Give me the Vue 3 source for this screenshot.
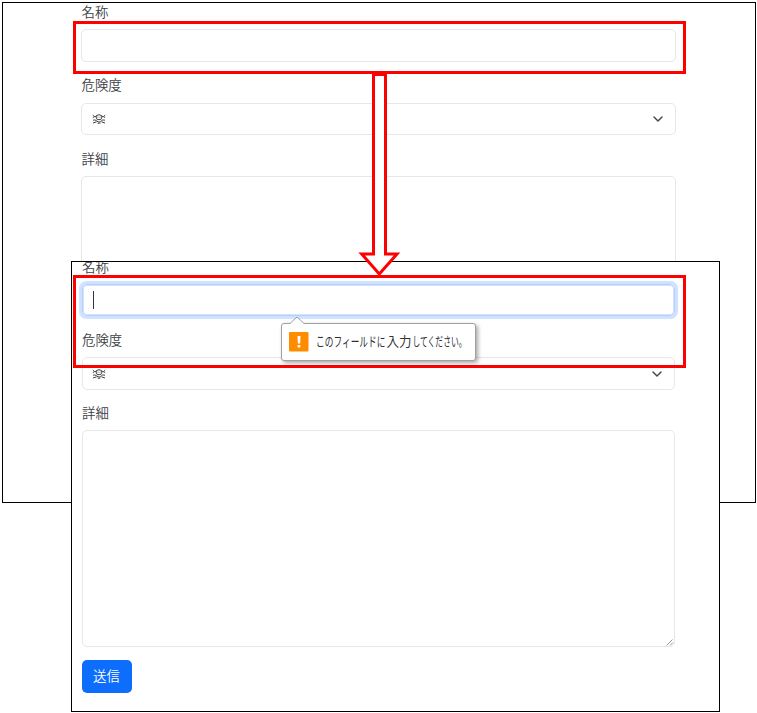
<script setup>
const message = [
  { text: 'このフィールドに', x: 0, width: 69.5 },
  { text: '入力', x: 70.5, width: 25 },
  { text: 'してください。', x: 96.5, width: 54 },
]
const skull = 'M4.3 4.8V2.6Q7 .8 9.7 2.6V4.8L8.8 6.6H5.2ZM5.6 4.2H6.4M7.6 4.2H8.4M.8 2.2L2.6 3.6L.8 4.6M13.2 2.2L11.4 3.6L13.2 4.6M2.6 3.6H4M11.4 3.6H10M1 7.2Q3 6.4 4.6 7.8T7 9Q8.4 9.2 9.4 7.8T13 7.2M1 10L4.6 8.8M13 10L9.4 8.8M5.6 10.2H8.4'
</script>

<template>
  <main class="stage">
    <section class="panel back">
      <label class="label">名称</label>
      <div class="field"></div>
      <label class="label">危険度</label>
      <div class="field select">
        <svg class="skull" width="14" height="12" viewBox="0 0 14 12"><path :d="skull" /></svg>
        <svg class="chevron" width="12" height="8" viewBox="0 0 12 8"><path d="M2 2L6 6L10 2" /></svg>
      </div>
      <label class="label">詳細</label>
      <div class="field area"></div>
    </section>

    <section class="panel front">
      <label class="label">名称</label>
      <div class="field focused"><span class="caret"></span></div>
      <label class="label">危険度</label>
      <div class="field select">
        <svg class="skull" width="14" height="12" viewBox="0 0 14 12"><path :d="skull" /></svg>
        <svg class="chevron" width="12" height="8" viewBox="0 0 12 8"><path d="M2 2L6 6L10 2" /></svg>
      </div>
      <label class="label">詳細</label>
      <div class="field area">
        <svg class="grip" width="8" height="8" viewBox="0 0 8 8"><path d="M.5 7.5L6.5 1.5M4 7.5L7 4.5" /></svg>
      </div>
      <button class="submit">送信</button>
    </section>

    <div class="mark first"></div>
    <div class="mark second"></div>
    <svg class="arrow" width="44" height="206" viewBox="0 0 44 206">
      <path d="M15.5 2.5H27.5V182H39L21.3 202L3.7 182H15.5Z" />
    </svg>

    <div class="tooltip">
      <svg class="pointer" width="16" height="9" viewBox="0 0 16 9"><path class="fill" d="M1 9V7.5L8 1L15 7.5V9Z" /><path class="edge" d="M1 7.5L8 1L15 7.5" /></svg>
      <svg class="warning" width="20" height="20" viewBox="0 0 20 20">
        <rect width="19.5" height="19.5" rx="1" fill="#ff8c00" />
        <path d="M8.5 4H11.5L11.2 11.5H8.8ZM8.6 13H11.4V15.6H8.6Z" fill="#fff" />
      </svg>
      <svg class="message" width="152" height="20" viewBox="0 0 152 20">
        <text v-for="part in message" :key="part.x" :x="part.x" y="14" :textLength="part.width" lengthAdjust="spacingAndGlyphs">{{ part.text }}</text>
      </svg>
    </div>
  </main>
</template>

<style>
body {
  background: #fff;
}
</style>

<style scoped>
.stage {
  position: relative;
  width: 757px;
  height: 713px;
  overflow: hidden;
  font-family: "Noto Sans CJK JP", sans-serif;
  color: #3c4146;
}
.panel {
  position: absolute;
  box-sizing: border-box;
  display: flex;
  flex-direction: column;
  border: 1px solid #000;
  background: #fff;
  overflow: hidden;
}
.back {
  left: 2px;
  top: 2px;
  width: 754px;
  height: 501px;
  padding: 0 79px 0 78px;
}
.front {
  left: 71px;
  top: 261px;
  width: 649px;
  height: 451px;
  padding: 0 44px 0 10px;
}
.label {
  flex: none;
  height: 20px;
  line-height: 20px;
  font-size: 13.4px;
  font-weight: 350;
}
.back .label {
  padding-left: 0.5px;
}
.field {
  flex: none;
  box-sizing: border-box;
  border: 1px solid #e6e7e9;
  border-radius: 5px;
}
.back .field {
  height: 33px;
  margin: 8px 0 12px;
}
.back .label:first-child {
  margin-top: -2px;
}
.back .field.select {
  height: 32px;
  margin: 9px 0 13px;
}
.back .field.area {
  height: 250px;
  margin: 8px 0 0;
}
.front .label:first-child {
  margin-top: -6px;
}
.front .field {
  height: 32px;
  margin: 8px 0 13px;
}
.front .field.select {
  height: 33px;
  margin: 8px 0 12px;
}
.front .field.area {
  height: 217px;
  margin: 8px 0 13px;
  display: flex;
  align-items: flex-end;
  justify-content: flex-end;
}
.front .field.focused {
  display: flex;
  align-items: center;
  padding-left: 10px;
  border-color: #b5d0fb;
  box-shadow: 0 0 1px 2.5px #cfe1ff, inset 0 0 0 1px #d5e4fd;
}
.caret {
  width: 1px;
  height: 18px;
  background: #33373b;
}
.select {
  display: flex;
  align-items: center;
  justify-content: space-between;
  padding: 0 11px 0 10px;
}
.front .select {
  padding-left: 9px;
}
.skull path {
  fill: none;
  stroke: #3f4347;
  stroke-width: 1;
}
.chevron path {
  fill: none;
  stroke: #45494e;
  stroke-width: 1.5;
  stroke-linecap: round;
  stroke-linejoin: round;
}
.grip path {
  stroke: #999;
  stroke-width: 1;
}
.submit {
  flex: none;
  align-self: flex-start;
  width: 50px;
  height: 33px;
  padding: 0 1px 3px 0;
  border: 0;
  border-radius: 5px;
  background: #0d6efd;
  color: #fff;
  font: 350 13.4px/29px "Noto Sans CJK JP", sans-serif;
}
.mark {
  position: absolute;
  left: 73px;
  width: 613px;
  box-sizing: border-box;
  border: 3px solid #f00;
}
.first {
  top: 21px;
  height: 53px;
}
.second {
  top: 275px;
  height: 93px;
}
.arrow {
  position: absolute;
  left: 358px;
  top: 72px;
}
.arrow path {
  fill: #fff;
  stroke: #f00;
  stroke-width: 3;
}
.tooltip {
  position: absolute;
  left: 281px;
  top: 323px;
  width: 195px;
  height: 38px;
  box-sizing: border-box;
  display: flex;
  align-items: center;
  gap: 7px;
  padding: 0 7px 1px;
  border: 1px solid #a0a0a0;
  border-radius: 3px;
  background: #fff;
  box-shadow: 2px 2px 4px rgba(0, 0, 0, 0.35);
}
.pointer {
  position: absolute;
  left: 7px;
  top: -8px;
}
.pointer .fill {
  fill: #fff;
}
.pointer .edge {
  fill: none;
  stroke: #a0a0a0;
}
.warning,
.message {
  flex: none;
}
.message {
  overflow: visible;
}
.message text {
  font-size: 13px;
  fill: #303236;
}
</style>
